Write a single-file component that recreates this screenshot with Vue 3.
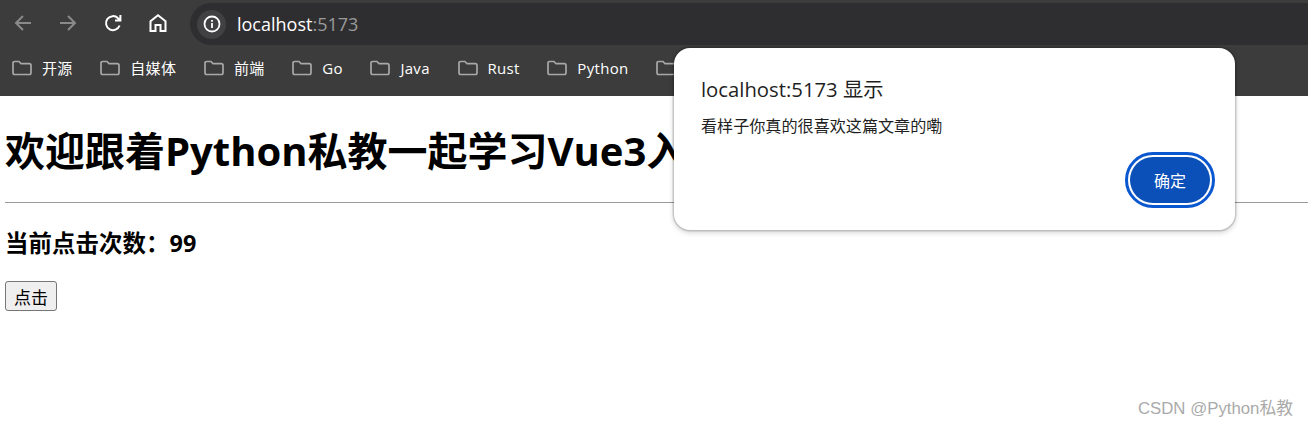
<script setup>
const bookmarks = ['开源', '自媒体', '前端', 'Go', 'Java', 'Rust', 'Python', '其他']
</script>

<template>
  <div class="page">
    <header class="chrome">
      <div class="toolbar">
        <div class="nav">
          <svg class="nav-icon off" viewBox="0 0 24 24"><path d="M20 12H5M12 5l-7 7 7 7" /></svg>
          <svg class="nav-icon off" viewBox="0 0 24 24"><path d="M4 12h15M12 5l7 7-7 7" /></svg>
          <svg class="nav-icon" viewBox="0 0 24 24"><path d="M18.6 14.5A7 7 0 1 1 17 7.2L19 9.2M19.4 4v5.4H14" /></svg>
          <svg class="nav-icon" viewBox="0 0 24 24"><path d="M4.500 20V10.200L12 4.300l7.500 5.900V20h-5v-6h-5v6z" /></svg>
        </div>
        <div class="omnibox">
          <span class="site-info">
            <svg viewBox="0 0 20 20" width="20" height="20">
              <circle cx="10" cy="10" r="7.500" fill="none" stroke="#fff" stroke-width="1.800" />
              <rect x="9.100" y="9" width="1.800" height="5" fill="#fff" />
              <rect x="9.100" y="6" width="1.800" height="1.800" fill="#fff" />
            </svg>
          </span>
          <span class="url">localhost<span class="port">:5173</span></span>
        </div>
      </div>
      <nav class="bookmarks">
        <span v-for="b in bookmarks" :key="b" class="bookmark">
          <svg viewBox="0 0 20 16" width="20" height="16">
            <path d="M1 3.200Q1 1.500 2.700 1.500H7L9 3.700H17.300Q19 3.700 19 5.400V12.800Q19 14.500 17.300 14.500H2.700Q1 14.500 1 12.800z" />
          </svg>
          <span>{{ b }}</span>
        </span>
      </nav>
    </header>

    <main class="content">
      <h1>欢迎跟着Python私教一起学习Vue3入门</h1>
      <hr />
      <h3>当前点击次数：99</h3>
      <button type="button">点击</button>
    </main>

    <section class="dialog">
      <div class="dialog-title">localhost:5173 显示</div>
      <div class="dialog-msg">看样子你真的很喜欢这篇文章的嘞</div>
      <div class="dialog-actions"><button type="button" class="ok">确定</button></div>
    </section>

    <div class="watermark">CSDN @Python私教</div>
  </div>
</template>

<style scoped>
.page {
  position: relative;
  width: 1308px;
  height: 428px;
  overflow: hidden;
  background: #fff;
  color: #000;
  font-family: "Open Sans", "Noto Sans CJK SC", sans-serif;
}
.chrome { height: 96px; background: #3c3c3c; }
.toolbar { display: flex; height: 51px; align-items: flex-start; }
.nav { display: flex; gap: 21px; padding: 11px 0 0 11px; width: 190px; box-sizing: border-box; flex: none; }
.nav-icon { width: 24px; height: 24px; fill: none; stroke: #fff; stroke-width: 2; }
.off { stroke: #8a8a8a; }
.omnibox {
  flex: 1;
  display: flex;
  align-items: center;
  height: 42px;
  margin-top: 3px;
  background: #2e2e30;
  border-radius: 21px 0 0 21px;
  padding-left: 7px;
}
.site-info {
  width: 29px;
  height: 29px;
  border-radius: 50%;
  background: #414143;
  display: flex;
  align-items: center;
  justify-content: center;
}
.url { margin-left: 11px; color: #fff; font-size: 18px; }
.port { color: #9a9a9a; }
.bookmarks { display: flex; gap: 27.700px; padding-left: 12px; height: 45px; align-items: center; margin-top: -6px; }
.bookmark { display: flex; align-items: center; gap: 10px; color: #fff; font-size: 15px; letter-spacing: 0.3px; white-space: nowrap; }
.bookmark svg { fill: none; stroke: #a8a8a8; stroke-width: 1.700; flex: none; }
.content { padding-left: 5px; }
h1 { margin: 26px 0 0; font-size: 40px; line-height: 58px; font-weight: 700; white-space: nowrap; }
hr { margin: 22px 0 0; border: 0; border-top: 1px solid #9a9a9a; }
h3 { margin: 24px 0 0; font-size: 23.400px; line-height: 32px; font-weight: 700; letter-spacing: 0.1px; }
.content button {
  display: block;
  margin-top: 22px;
  width: 52px;
  height: 30px;
  padding: 0;
  border: 1px solid #767676;
  border-radius: 3px;
  background: #efefef;
  color: #000;
  font: 17px/1 "Noto Sans CJK SC", sans-serif;
}
.dialog {
  position: absolute;
  left: 674px;
  top: 48px;
  width: 561px;
  height: 182px;
  box-sizing: border-box;
  padding: 27px 20px 0 27px;
  background: #fff;
  border-radius: 16px;
  box-shadow: 0 0 0 1.500px rgba(0, 0, 0, 0.14), 0 2px 5px 1px rgba(0, 0, 0, 0.16);
}
.dialog-title { font-size: 20.300px; line-height: 28px; color: #1f1f1f; }
.dialog-msg { margin-top: 12px; font-size: 16.100px; line-height: 22px; color: #1f1f1f; }
.dialog-actions { display: flex; justify-content: flex-end; margin-top: 15px; }
.ok {
  width: 80px;
  height: 46px;
  border: 0;
  border-radius: 23px;
  background: #0b4fb8;
  color: #fff;
  font: 16px "Noto Sans CJK SC", sans-serif;
  outline: 3px solid #0b57d0;
  outline-offset: 2px;
  margin: 5px;
  padding: 0;
}
.watermark {
  position: absolute;
  right: 15px;
  top: 398px;
  font: 16.800px/22px "Liberation Sans", "Noto Sans CJK SC", sans-serif;
  color: #aaa;
}
</style>
